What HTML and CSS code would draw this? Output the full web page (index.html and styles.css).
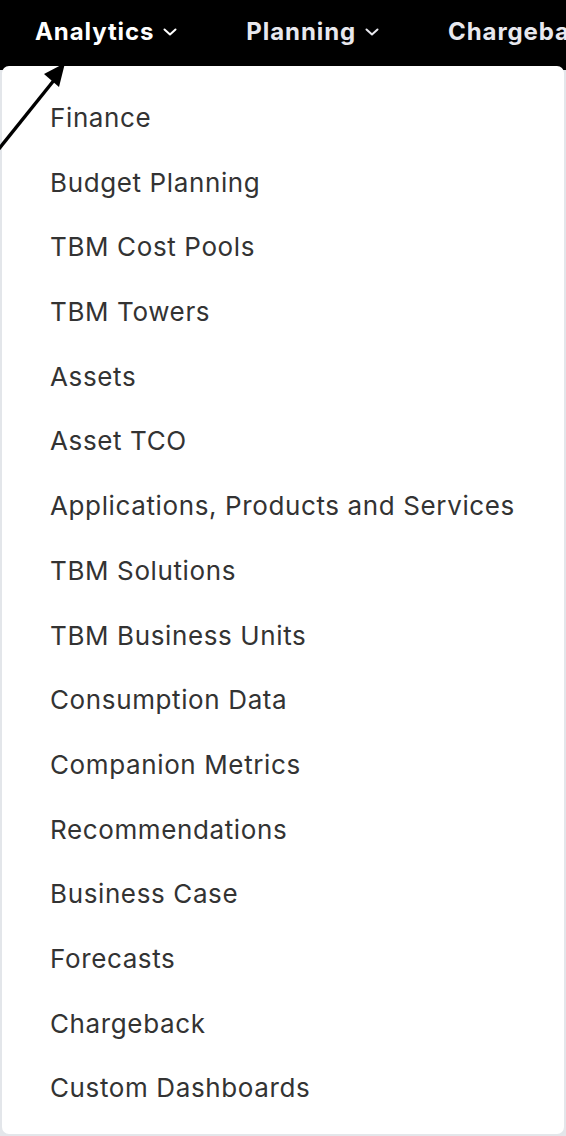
FILE: index.html
```html
<!DOCTYPE html>
<html>
<head>
<meta charset="utf-8">
<link rel="stylesheet" href="styles.css">
</head>
<body>
<div class="page">
  <nav class="topbar">
    <span class="nav-item active">Analytics <svg class="chev" viewBox="0 0 14 8" width="14" height="8"><path d="M1.5 1.5 L7 6.5 L12.5 1.5" fill="none" stroke="currentColor" stroke-width="2" stroke-linecap="round" stroke-linejoin="round"/></svg></span>
    <span class="nav-item">Planning <svg class="chev" viewBox="0 0 14 8" width="14" height="8"><path d="M1.5 1.5 L7 6.5 L12.5 1.5" fill="none" stroke="currentColor" stroke-width="2" stroke-linecap="round" stroke-linejoin="round"/></svg></span>
    <span class="nav-item">Chargeback</span>
  </nav>
  <ul class="menu">
    <li>Finance</li>
    <li>Budget Planning</li>
    <li>TBM Cost Pools</li>
    <li>TBM Towers</li>
    <li>Assets</li>
    <li>Asset TCO</li>
    <li>Applications, Products and Services</li>
    <li>TBM Solutions</li>
    <li>TBM Business Units</li>
    <li>Consumption Data</li>
    <li>Companion Metrics</li>
    <li>Recommendations</li>
    <li>Business Case</li>
    <li>Forecasts</li>
    <li>Chargeback</li>
    <li>Custom Dashboards</li>
  </ul>
  <svg class="arrow" width="80" height="160" viewBox="0 0 80 160">
    <path d="M-2 150 L55 79" fill="none" stroke="#000" stroke-width="3.4"/>
    <path d="M65 63 L44 74 L59 87 Z" fill="#000"/>
  </svg>
</div>
</body>
</html>
```

FILE: styles.css
```css
html, body {
  margin: 0;
  padding: 0;
}
body {
  background: #e3e6ea;
  font-family: Inter, "Noto Sans", "Liberation Sans", sans-serif;
  width: 566px;
  height: 1136px;
  overflow: hidden;
}
.page {
  position: relative;
  width: 566px;
  height: 1136px;
  background: linear-gradient(#000 0, #000 70px, #e3e6ea 70px);
}
.topbar {
  height: 66px;
  background: #000;
  display: flex;
  align-items: center;
  padding-left: 35px;
  white-space: nowrap;
  overflow: hidden;
  box-sizing: border-box;
  padding-bottom: 4px;
}
.nav-item {
  color: #e8e8ee;
  font-weight: 700;
  font-size: 24px;
  letter-spacing: 0.9px;
  display: inline-flex;
  align-items: center;
  margin-right: 69px;
  flex-shrink: 0;
}
.nav-item.active {
  color: #fff;
}
.chev {
  margin-left: 9px;
  margin-top: 1px;
}
.menu {
  list-style: none;
  margin: 0 2px 0 2px;
  padding: 20px 0 13px 0;
  background: #fff;
  border-radius: 7px;
  height: 1068px;
  box-sizing: border-box;
}
.menu li {
  height: 64.7px;
  line-height: 64.7px;
  padding-left: 48px;
  font-size: 26px;
  color: #333333;
  letter-spacing: 0.62px;
}
.arrow {
  position: absolute;
  left: 0;
  top: 0;
  overflow: visible;
}
```
